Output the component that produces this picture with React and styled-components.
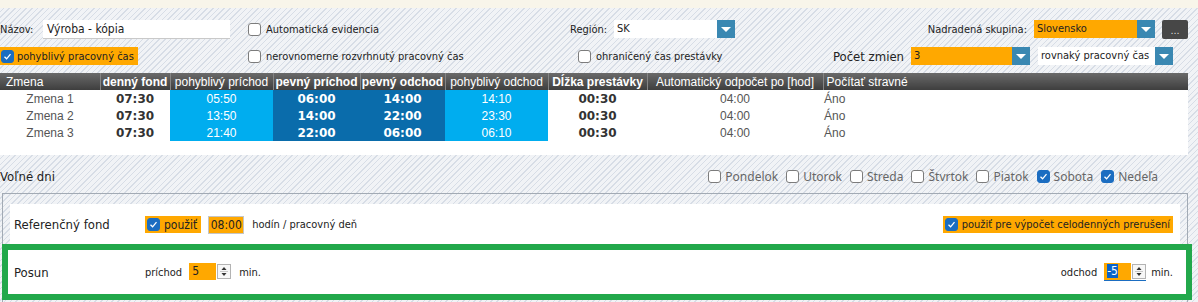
import React from 'react'
import styled, { createGlobalStyle } from 'styled-components'

const ORANGE = '#ffa800'
const LIGHT_BLUE = '#00adef'
const DARK_BLUE = '#0a6cab'
const DROP_BLUE = '#3a88b2'
const UI_FONT = '"Liberation Sans", Arial, sans-serif'
const TAHOMA = '"DejaVu Sans Condensed", "Liberation Sans", Arial, sans-serif'

const GlobalStyle = createGlobalStyle`
  body {
    margin: 0;
    font-family: ${UI_FONT};
  }
`

const Page = styled.div`
  width: 1198px;
  height: 302px;
  overflow: hidden;
  color: #222;
  background: repeating-linear-gradient(135deg, #d7dde6 0 1px, #f1f3f6 1px 4px);
`

const TopStrip = styled.div`
  height: 8px;
  background: #f8f5ea;
`

const FormRow = styled.div`
  display: flex;
  align-items: center;
  height: ${(p) => p.h}px;
  margin-top: ${(p) => p.mt}px;
  padding-right: ${(p) => p.pr || 0}px;
`

const Cell = styled.div`
  display: flex;
  align-items: center;
  flex: 0 0 ${(p) => p.w}px;
`

const RightGroup = styled.div`
  display: flex;
  align-items: center;
  margin-left: auto;
  gap: ${(p) => p.gap || 0}px;
`

const Label = styled.span`
  font-family: ${TAHOMA};
  font-size: ${(p) => p.size || 11}px;
  color: #222;
  white-space: nowrap;
  width: ${(p) => (p.w ? `${p.w}px` : 'auto')};
  flex: none;
  margin-right: ${(p) => p.mr || 0}px;
  margin-left: ${(p) => p.ml || 0}px;
`

const TextInput = styled.div`
  width: ${(p) => p.w}px;
  height: 19px;
  box-sizing: border-box;
  background: #fff;
  border-bottom: 1px solid #c9c9c9;
  font-family: ${TAHOMA};
  font-size: 12px;
  line-height: 18px;
  padding-left: 4px;
`

const Box = styled.span`
  width: 13px;
  height: 13px;
  box-sizing: border-box;
  border-radius: 3px;
  flex: none;
  display: inline-flex;
  align-items: center;
  justify-content: center;
  margin-right: ${(p) => p.mr ?? 5}px;
  background: ${(p) => (p.checked ? '#1b6dc1' : '#fff')};
  border: 1px solid ${(p) => (p.checked ? '#1b6dc1' : '#7c7c7c')};
`

const CheckRow = styled.label`
  display: flex;
  align-items: center;
  font-family: ${(p) => (p.light ? '"Noto Sans", sans-serif' : TAHOMA)};
  font-size: ${(p) => (p.light ? 12 : 11)}px;
  color: ${(p) => (p.light ? '#666' : '#222')};
  white-space: nowrap;
`

const Chip = styled.div`
  display: flex;
  align-items: center;
  height: ${(p) => p.h || 18}px;
  background: ${ORANGE};
  padding: 0 ${(p) => p.pr || 4}px 0 ${(p) => p.pl || 1}px;
  font-family: ${TAHOMA};
  font-size: ${(p) => p.size || 11}px;
  color: #222;
  white-space: nowrap;
`

const Select = styled.div`
  display: flex;
  width: ${(p) => p.w}px;
  height: 18px;
  margin-right: ${(p) => p.mr || 0}px;
  background: ${(p) => (p.orange ? ORANGE : '#fff')};
  font-family: ${TAHOMA};
  font-size: 11px;
  line-height: 18px;
  color: #222;
`

const SelectText = styled.span`
  flex: 1;
  padding-left: 3px;
  white-space: nowrap;
`

const DropButton = styled.span`
  width: 18px;
  height: 18px;
  background: ${DROP_BLUE};
  display: flex;
  align-items: center;
  justify-content: center;

  &::after {
    content: '';
    border-left: 5px solid transparent;
    border-right: 5px solid transparent;
    border-top: 5px solid #fff;
  }
`

const DotsButton = styled.div`
  width: 26px;
  height: 19px;
  border-radius: 2px;
  background: #474747;
  color: #d8d8d8;
  font-size: 11px;
  text-align: center;
  line-height: 20px;
`

const TableWrap = styled.div`
  width: 1188px;
  height: 82px;
  margin-top: 8px;
  background: #fff;
`

const Table = styled.table`
  border-collapse: collapse;
  table-layout: fixed;
  width: 1188px;
  font-family: ${UI_FONT};
  font-size: 12px;
`

const Th = styled.th`
  height: 17px;
  padding: 0;
  font-weight: ${(p) => (p.bold ? 700 : 400)};
  text-align: ${(p) => p.align || 'center'};
  padding-left: ${(p) => p.pl || 0}px;
  color: #fff;
  white-space: nowrap;
  background: linear-gradient(#6a6a6a, #3e3e3e);
  border-left: 1px solid #858585;

  &:first-child {
    border-left: none;
  }
`

const Td = styled.td`
  height: 17px;
  padding: 0;
  text-align: ${(p) => p.align || 'center'};
  white-space: nowrap;
  background: ${(p) => (p.tone === 'light' ? LIGHT_BLUE : p.tone === 'dark' ? DARK_BLUE : 'transparent')};
  color: ${(p) => (p.tone ? '#fff' : p.bold ? '#333' : '#555')};
  font-family: ${(p) => (p.bold ? '"DejaVu Sans", Verdana, sans-serif' : UI_FONT)};
  font-weight: ${(p) => (p.bold ? 700 : 400)};
  font-size: 12px;
  padding-left: ${(p) => p.pl || 0}px;
`

const Panel = styled.div`
  margin: 7px 0 0 2px;
  width: 1186px;
  height: 120px;
  box-sizing: border-box;
  border: 1px solid #a2aab4;
  border-bottom: none;
  padding: 10px 7px 0;
`

const PanelRow = styled.div`
  display: flex;
  align-items: center;
  background: #fff;
  height: 41px;
  padding: 0 7px 0 4px;
`

const Highlight = styled.div`
  display: flex;
  align-items: center;
  background: #fff;
  height: 44px;
  margin: -1px -12px 0 -8px;
  border: 6px solid #22a84b;
  padding: 0 13px 0 6px;
`

const NumInput = styled.div`
  display: flex;
  align-items: center;
  height: 17px;
  border-bottom: 1px solid ${(p) => (p.focused ? '#1b6dc1' : 'transparent')};
`

const NumValue = styled.span`
  width: 27px;
  height: 17px;
  box-sizing: border-box;
  background: ${ORANGE};
  font-family: ${TAHOMA};
  font-size: 12px;
  line-height: 17px;
  padding-left: 3px;
`

const Selected = styled.span`
  background: #0a63c9;
  color: #fff;
`

const Spinner = styled.span`
  width: 14px;
  height: 15px;
  margin-left: 1px;
  box-sizing: border-box;
  border: 1px solid #b3b3b3;
  background: #f7f7f7;
  display: flex;
`

const TimeInput = styled.div`
  width: 36px;
  height: 18px;
  box-sizing: border-box;
  margin-left: 7px;
  background: ${ORANGE};
  border: 1px solid #c5c5c5;
  font-family: ${TAHOMA};
  font-size: 12px;
  line-height: 16px;
  text-align: center;
`

function Check({ checked, mr }) {
  return (
    <Box checked={checked} mr={mr}>
      {checked && (
        <svg width="9" height="9" viewBox="0 0 9 9">
          <polyline points="1.5,4.8 3.6,6.8 7.5,2.2" fill="none" stroke="#fff" strokeWidth="1.3" />
        </svg>
      )}
    </Box>
  )
}

function Dropdown({ w, orange, value, mr }) {
  return (
    <Select w={w} orange={orange} mr={mr}>
      <SelectText>{value}</SelectText>
      <DropButton />
    </Select>
  )
}

function Spin() {
  return (
    <Spinner>
      <svg width="12" height="13" viewBox="0 0 12 13">
        <path d="M6 2 L8.5 5 L3.5 5 Z" fill="#333" />
        <line x1="2" y1="6.5" x2="10" y2="6.5" stroke="#c8c8c8" />
        <path d="M6 11 L8.5 8 L3.5 8 Z" fill="#333" />
      </svg>
    </Spinner>
  )
}

const shifts = [
  ['Zmena 1', '07:30', '05:50', '06:00', '14:00', '14:10'],
  ['Zmena 2', '07:30', '13:50', '14:00', '22:00', '23:30'],
  ['Zmena 3', '07:30', '21:40', '22:00', '06:00', '06:10']
]

const days = [
  ['Pondelok', false],
  ['Utorok', false],
  ['Streda', false],
  ['Štvrtok', false],
  ['Piatok', false],
  ['Sobota', true],
  ['Nedeľa', true]
]

export default function App() {
  return (
    <>
      <GlobalStyle />
      <Page>
        <TopStrip />

        <FormRow h={20} mt={11} pr={10}>
          <Cell w={248}>
            <Label w={43}>Názov:</Label>
            <TextInput w={187}>Výroba - kópia</TextInput>
          </Cell>
          <Cell w={322}>
            <CheckRow>
              <Check />
              Automatická evidencia
            </CheckRow>
          </Cell>
          <Cell w={165}>
            <Label w={44}>Región:</Label>
            <Dropdown w={121} value="SK" />
          </Cell>
          <RightGroup>
            <Label mr={7}>Nadradená skupina:</Label>
            <Dropdown w={121} orange value="Slovensko" mr={7} />
            <DotsButton>...</DotsButton>
          </RightGroup>
        </FormRow>

        <FormRow h={18} mt={8} pr={25}>
          <Cell w={248}>
            <Chip>
              <Check checked mr={3} />
              pohyblivý pracovný čas
            </Chip>
          </Cell>
          <Cell w={330}>
            <CheckRow>
              <Check />
              nerovnomerne rozvrhnutý pracovný čas
            </CheckRow>
          </Cell>
          <Cell w={240}>
            <CheckRow>
              <Check />
              ohraničený čas prestávky
            </CheckRow>
          </Cell>
          <RightGroup>
            <Label size={13} mr={7}>Počet zmien</Label>
            <Dropdown w={119} orange value="3" mr={8} />
            <Dropdown w={135} value="rovnaký pracovný čas" />
          </RightGroup>
        </FormRow>

        <TableWrap>
          <Table>
            <colgroup>
              <col style={{ width: 100 }} />
              <col style={{ width: 70 }} />
              <col style={{ width: 103 }} />
              <col style={{ width: 87 }} />
              <col style={{ width: 85 }} />
              <col style={{ width: 103 }} />
              <col style={{ width: 99 }} />
              <col style={{ width: 176 }} />
              <col />
            </colgroup>
            <thead>
              <tr>
                <Th align="left" pl={6}>Zmena</Th>
                <Th bold>denný fond</Th>
                <Th>pohyblivý príchod</Th>
                <Th bold>pevný príchod</Th>
                <Th bold>pevný odchod</Th>
                <Th>pohyblivý odchod</Th>
                <Th bold>Dĺžka prestávky</Th>
                <Th>Automatický odpočet po [hod]</Th>
                <Th align="left" pl={3}>Počítať stravné</Th>
              </tr>
            </thead>
            <tbody>
              {shifts.map(([name, fond, pp, fp, fo, po]) => (
                <tr key={name}>
                  <Td>{name}</Td>
                  <Td bold>{fond}</Td>
                  <Td tone="light">{pp}</Td>
                  <Td tone="dark" bold>{fp}</Td>
                  <Td tone="dark" bold>{fo}</Td>
                  <Td tone="light">{po}</Td>
                  <Td bold>00:30</Td>
                  <Td>04:00</Td>
                  <Td align="left" pl={1}>Áno</Td>
                </tr>
              ))}
            </tbody>
          </Table>
        </TableWrap>

        <FormRow h={20} mt={11} pr={40}>
          <Label size={13}>Voľné dni</Label>
          <RightGroup gap={8}>
            {days.map(([day, on]) => (
              <CheckRow light key={day}>
                <Check checked={on} mr={4} />
                {day}
              </CheckRow>
            ))}
          </RightGroup>
        </FormRow>

        <Panel>
          <PanelRow>
            <Label size={13} w={131}>Referenčný fond</Label>
            <Chip h={17} size={12} pl={2} pr={4}>
              <Check checked mr={4} />
              použiť
            </Chip>
            <TimeInput>08:00</TimeInput>
            <Label ml={8}>hodín / pracovný deň</Label>
            <RightGroup>
              <Chip h={17} pl={2} pr={3}>
                <Check checked mr={4} />
                použiť pre výpočet celodenných prerušení
              </Chip>
            </RightGroup>
          </PanelRow>

          <Highlight>
            <Label size={13} w={131}>Posun</Label>
            <Label mr={7}>príchod</Label>
            <NumInput>
              <NumValue>5</NumValue>
              <Spin />
            </NumInput>
            <Label ml={8}>min.</Label>
            <RightGroup>
              <Label mr={7}>odchod</Label>
              <NumInput focused>
                <NumValue>
                  <Selected>-5</Selected>
                </NumValue>
                <Spin />
              </NumInput>
              <Label ml={5}>min.</Label>
            </RightGroup>
          </Highlight>
        </Panel>
      </Page>
    </>
  )
}
